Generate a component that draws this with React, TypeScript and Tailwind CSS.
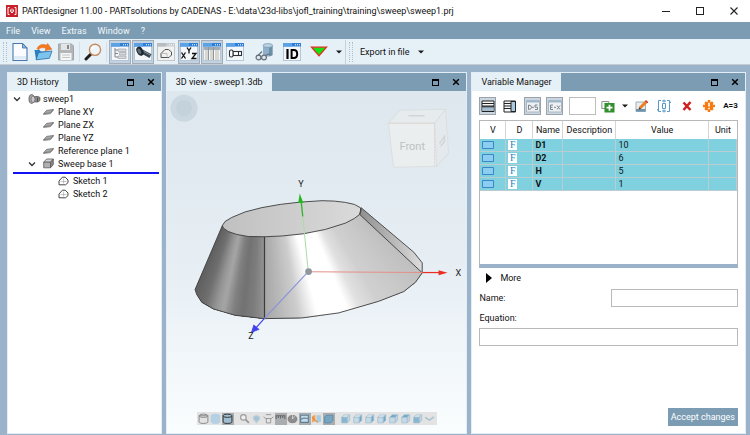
import React from 'react';
import type { ReactNode } from 'react';

/* ---------- shared icons ---------- */

function Caret() {
  return (
    <svg viewBox="0 0 6 4" className="h-1 w-1.5" aria-hidden="true">
      <path d="M0 .5h6L3 3.5z" fill="#1a1a1a" />
    </svg>
  );
}

function Chevron() {
  return (
    <svg viewBox="0 0 8 8" className="size-2" fill="none" stroke="#333" strokeWidth="1.3" aria-hidden="true">
      <path d="M1 2.5 4 5.5 7 2.5" />
    </svg>
  );
}

function WindowIcon({ children, dim }: { children?: ReactNode; dim?: boolean }) {
  return (
    <svg viewBox="0 0 18 18" className="size-[18px]" aria-hidden="true">
      <rect x=".5" y=".5" width="17" height="17" fill={dim ? '#f1f1f0' : '#f4f7fa'} stroke={dim ? '#c3c6c9' : '#b4c6d8'} />
      <rect x="0" y="0" width="18" height="3.5" fill={dim ? '#c9cccf' : '#2f7fd6'} />
      <rect x="0" y="0" width="9" height="3.5" fill={dim ? '#b9bcc0' : '#5aa2e6'} />
      <path d="M12 1.8h1M14 1.8h1M16 1.8h1" stroke="#fff" strokeWidth="1" />
      {children}
    </svg>
  );
}

function PartIcon() {
  return (
    <svg viewBox="0 0 13 10" className="h-2.5 w-[13px]" aria-hidden="true">
      <path d="M5 2.5h5l2 1v3l-2 1.5H5z" fill="#8b8b8b" stroke="#555" strokeWidth=".7" />
      <ellipse cx="3.6" cy="5" rx="2.6" ry="4.4" fill="#a9a9a9" stroke="#555" strokeWidth=".8" />
      <ellipse cx="5" cy="5.2" rx="2" ry="3.2" fill="#c9c9c9" stroke="#666" strokeWidth=".7" />
      <path d="M9.5 3.5v4" stroke="#444" strokeWidth=".8" />
    </svg>
  );
}

function PlaneIcon() {
  return (
    <svg viewBox="0 0 11 8" className="h-2 w-[11px]" aria-hidden="true">
      <path d="M.6 5.8 3.6 2.4l6.8-.9-3 3.4z" fill="#a6a6a6" stroke="#6b6b6b" strokeWidth=".8" />
      <path d="M.6 5.8v.7l6.8-.8 3-3.4v-.8" fill="none" stroke="#6b6b6b" strokeWidth=".7" />
    </svg>
  );
}

function SweepIcon() {
  return (
    <svg viewBox="0 0 11 11" className="size-[11px]" aria-hidden="true">
      <path d="M.7 4.2 3.6 1h6.7l-2.8 3.2z" fill="#d4d4d4" stroke="#5c5c5c" strokeWidth=".8" />
      <path d="M.7 4.2h6.8v5.6H.7z" fill="#b0b0b0" stroke="#5c5c5c" strokeWidth=".8" />
      <path d="m7.5 4.2 2.8-3.2v5.6L7.5 9.8z" fill="#878787" stroke="#5c5c5c" strokeWidth=".8" />
    </svg>
  );
}

function SketchIcon() {
  return (
    <svg viewBox="0 0 11 10" className="h-2.5 w-[11px]" fill="none" stroke="#333" strokeWidth=".9" aria-hidden="true">
      <path d="M1 8.8V5L4.4 1.2h2.8L10 4v2.6L7.6 8.8z" fill="#fff" />
      <path d="M5.6 2.5v5M2.6 5.6h6" stroke="#aaa" strokeWidth=".7" />
    </svg>
  );
}

/* ---------- main toolbar ---------- */

type Tool = { label: string; icon: ReactNode; active?: boolean };

const fileTools: Tool[] = [
  {
    label: 'New',
    icon: (
      <svg viewBox="0 0 16 20" className="h-5 w-4">
        <path d="M1 1.5h9.5L15 6v12.500H1z" fill="#fafcff" stroke="#4a78ac" strokeWidth="1.1" />
        <path d="M10.500 1.500V6H15z" fill="#8fb6dd" stroke="#4a78ac" strokeWidth=".9" />
        <path d="M2 14h12v3.500H2z" fill="#dfebf7" />
      </svg>
    ),
  },
  {
    label: 'Open',
    icon: (
      <svg viewBox="0 0 20 18" className="h-[18px] w-5">
        <path d="M1.500 7h5l1.500 1.500h8V15l-13 1.500z" fill="#2b7fc0" />
        <path d="M3 16.800 5.500 9.500 19 8l-2.600 7.300z" fill="#7cc3ee" stroke="#2470ac" strokeWidth=".8" />
        <path d="M4 5.500C6 1.500 10 .5 13.500 2.300L14.600 .6 18.800 6.300 12 7.600l1-2C10.500 4 7 4.300 5.500 7z" fill="#f47a20" stroke="#dd5c0c" strokeWidth=".5" />
      </svg>
    ),
  },
  {
    label: 'Save',
    icon: (
      <svg viewBox="0 0 16 18" className="h-[18px] w-4">
        <path d="M.5 1h13L15.500 3v14H.5z" fill="#b3b6b9" stroke="#a3a6a9" />
        <path d="M3 1h9v6H3z" fill="#e2e4e6" />
        <path d="M9 2h2v4H9z" fill="#85888c" />
        <path d="M2.500 10h11v7h-11z" fill="#f5f6f7" />
        <path d="M4 12h8M4 14.500h8" stroke="#c2c5c8" />
      </svg>
    ),
  },
];

const searchTool: Tool = {
  label: 'Search',
  icon: (
    <svg viewBox="0 0 18 18" className="size-[18px]">
      <path d="M7.500 10.500 2 16" stroke="#1d1d1d" strokeWidth="3" strokeLinecap="round" />
      <circle cx="11" cy="6.800" r="5.600" fill="#eef5fb" stroke="#c98a5a" strokeWidth="1.400" />
      <path d="M8 6.500a3.200 3.200 0 0 1 3-3" fill="none" stroke="#fff" strokeWidth="1.500" />
    </svg>
  ),
};

const windowTools: Tool[] = [
  {
    label: 'History window',
    active: true,
    icon: (
      <WindowIcon>
        <path d="M4 5v9M4 7h3M4 10.500h3M4 14h3" stroke="#7f8488" fill="none" />
        <path d="M7 6h8v2.500H7zM8.500 9.500H15V12H8.500zM7 13h8v2.500H7z" fill="#d5d8da" stroke="#9a9fa3" strokeWidth=".6" />
      </WindowIcon>
    ),
  },
  {
    label: '3D window',
    active: true,
    icon: (
      <WindowIcon>
        <path d="m8 8.500 8.500 4.700" stroke="#39454f" strokeWidth="4.200" />
        <path d="m8.500 7.700 8 4.400" stroke="#8897a4" strokeWidth="1" />
        <ellipse cx="6" cy="8.200" rx="3.200" ry="4.800" transform="rotate(-28 6 8.200)" fill="#1f272e" />
        <ellipse cx="5.300" cy="8.200" rx="1.600" ry="2.900" transform="rotate(-28 5.300 8.200)" fill="#5e6c78" />
      </WindowIcon>
    ),
  },
  {
    label: 'Sketch window',
    icon: (
      <WindowIcon dim>
        <path d="M4 14.500V10.500L8 6.500h3.500L14.500 9v3L12 14.500z" fill="none" stroke="#4f5254" />
        <path d="M4 10.500h6v4" fill="none" stroke="#aeb1b3" strokeWidth=".8" />
      </WindowIcon>
    ),
  },
  {
    label: 'Coordinate window',
    active: true,
    icon: (
      <WindowIcon>
        <g fill="none" stroke="#111" strokeWidth="1.300">
          <path d="m1.500 9.500 4 6M5.500 9.500l-4 6" />
          <path d="m7 4.500 2 3 2-3M9 7.500v3" />
          <path d="M12 10.500h4l-4 5h4.500" />
        </g>
      </WindowIcon>
    ),
  },
  {
    label: 'Table window',
    active: true,
    icon: (
      <WindowIcon>
        <path d="M1 4h16v3H1z" fill="#a3adb6" />
        <path d="M2 7h3v10H2zM7 7h3v10H7zM12 7h4v10h-4z" fill="#d9d5cf" />
        <path d="M5.500 4v13M10.500 4v13" stroke="#8f979e" />
      </WindowIcon>
    ),
  },
  {
    label: 'Part window',
    icon: (
      <WindowIcon>
        <g fill="#fff" stroke="#2d3338" strokeWidth="1.100">
          <rect x="7" y="8.500" width="8.500" height="4" />
          <rect x="3.500" y="7" width="3.500" height="7" rx="1.500" />
          <path d="M12.500 8.500v4" />
        </g>
      </WindowIcon>
    ),
  },
];

const linkTool: Tool = {
  label: 'Link geometry',
  icon: (
    <svg viewBox="0 0 20 18" className="h-[18px] w-5">
      <path d="M8 2.500v9.500c2 2 7.500 2 9.500 0V2.500z" fill="#8fb0c8" />
      <path d="M14 3v10c1.500 0 2.800-.4 3.500-1V2.500z" fill="#6d90a9" />
      <ellipse cx="12.800" cy="2.500" rx="4.800" ry="2" fill="#b9d0e0" stroke="#6a8ca4" strokeWidth=".6" />
      <g fill="none" stroke="#66717a" strokeWidth="1.200">
        <circle cx="3.500" cy="14.500" r="2.400" fill="#dfe8ee" />
        <circle cx="9" cy="14.500" r="2.400" fill="#dfe8ee" />
        <path d="M3 12.500 7 8.500M10.500 12.500l3-1.500h2" />
      </g>
    </svg>
  ),
};

const idTool: Tool = {
  label: 'ID',
  icon: (
    <WindowIcon>
      <path d="M4.500 6v10" stroke="#000" strokeWidth="2.200" />
      <path d="M8.600 7v8h2.200q3.400 0 3.400-4t-3.400-4z" fill="none" stroke="#000" strokeWidth="2" />
    </WindowIcon>
  ),
};

function ToolButton({ tool }: { tool: Tool }) {
  return (
    <button
      type="button"
      aria-label={tool.label}
      className={
        tool.active
          ? 'flex h-6 w-[22px] items-center justify-center border border-[#a3adb8] bg-[#c3d2e0]'
          : 'flex h-6 w-[22px] items-center justify-center'
      }
    >
      {tool.icon}
    </button>
  );
}

function Grip() {
  return <span className="h-5 w-1 border-x border-dotted border-[#aebfcd]" />;
}

function MainToolbar() {
  return (
    <div className="flex h-[26px] shrink-0 items-center border-b border-[#c3ccd3] bg-[#e6f0f7] pl-[3px]">
      <Grip />
      <div className="ml-[2px] flex gap-px">
        {fileTools.map((t) => (
          <ToolButton key={t.label} tool={t} />
        ))}
      </div>
      <span className="ml-[2px] h-5 w-px bg-[#d3dee6]" />
      <div className="ml-[2px]">
        <ToolButton tool={searchTool} />
      </div>
      <span className="mx-[2px] h-5 w-px bg-[#d3dee6]" />
      <div className="flex gap-px">
        {windowTools.map((t) => (
          <ToolButton key={t.label} tool={t} />
        ))}
      </div>
      <div className="ml-2 flex gap-[5px]">
        <ToolButton tool={linkTool} />
        <ToolButton tool={idTool} />
        <button type="button" aria-label="Generate" className="flex h-6 items-center gap-2 pl-[2px]">
          <svg viewBox="0 0 18 12" className="h-3 w-[18px]" aria-hidden="true">
            <path d="M1.500 1.200h15L9 9.800z" fill="#12e312" stroke="#e0301e" strokeWidth="1.300" />
          </svg>
          <Caret />
        </button>
      </div>
      <span className="mx-[3px] h-6 w-px bg-[#c6d2db]" />
      <Grip />
      <button type="button" className="ml-[7px] flex items-center gap-2 whitespace-nowrap">
        Export in file
        <Caret />
      </button>
    </div>
  );
}

/* ---------- panels ---------- */

function Panel({ title, children }: { title: string; children: ReactNode }) {
  return (
    <section className="flex min-h-0 min-w-0 flex-col border border-[#e3edf5] bg-white">
      <header className="flex h-[18px] shrink-0 items-stretch justify-between bg-[#7b9cb3]">
        <h2 className="flex items-center bg-[#e6f0f7] px-[9px] whitespace-nowrap">{title}</h2>
        <div className="flex items-center gap-[13px] pr-[6px]">
          <button type="button" aria-label={`Maximize ${title}`} className="h-[7px] w-[7px] border border-t-2 border-black" />
          <button type="button" aria-label={`Close ${title}`}>
            <svg viewBox="0 0 8 8" className="size-2" stroke="#000" strokeWidth="1.500" aria-hidden="true">
              <path d="m1.200 1.200 5.600 5.600M6.800 1.200 1.200 6.800" />
            </svg>
          </button>
        </div>
      </header>
      {children}
    </section>
  );
}

function TreeRow({ icon, label, open, level }: { icon: ReactNode; label: string; open?: boolean; level: 0 | 1 | 2 }) {
  const indent = level === 0 ? 'pl-[5px]' : level === 1 ? 'pl-5' : 'pl-[35px]';
  return (
    <li className={`flex h-[13px] items-center whitespace-nowrap ${indent}`}>
      <span className="flex w-[15px] items-center">{open && <Chevron />}</span>
      <span className="flex w-[15px] items-center">{icon}</span>
      {label}
    </li>
  );
}

function HistoryPanel() {
  return (
    <Panel title="3D History">
      <ul className="pt-px">
        <TreeRow level={0} open icon={<PartIcon />} label="sweep1" />
        <TreeRow level={1} icon={<PlaneIcon />} label="Plane XY" />
        <TreeRow level={1} icon={<PlaneIcon />} label="Plane ZX" />
        <TreeRow level={1} icon={<PlaneIcon />} label="Plane YZ" />
        <TreeRow level={1} icon={<PlaneIcon />} label="Reference plane 1" />
        <TreeRow level={1} open icon={<SweepIcon />} label="Sweep base 1" />
        <li aria-hidden="true" className="mt-[2px] mr-[2px] ml-[5px] h-[2px] bg-[#1212f5]" />
        <TreeRow level={2} icon={<SketchIcon />} label="Sketch 1" />
        <TreeRow level={2} icon={<SketchIcon />} label="Sketch 2" />
      </ul>
    </Panel>
  );
}

/* ---------- 3D model ---------- */

type Pt = [number, number];

const topRim: Pt[] = [[222.3, 225], [223.3, 227.7], [228, 231], [236.7, 234], [248, 236], [264, 236.3], [282, 235.500], [303.3, 233.3], [325, 229], [345, 222.7], [354, 218], [359.3, 214]];
const topBack: Pt[] = [[359.3, 214], [360.7, 210], [360, 207.3], [354, 204], [345, 202], [334, 200.700], [321.7, 200.3], [300, 201.7], [280, 204], [261.7, 207.2], [245, 211.500], [231.7, 217], [225, 221], [222.3, 225]];
const baseRim: Pt[] = [[195, 289], [196.7, 294], [201.7, 301.7], [213.3, 308.3], [235, 314.7], [264, 318], [301.7, 317.3], [338.3, 312.3], [378.3, 300.7], [403.3, 291], [415, 281.7], [421.7, 272.3]];
const rightRib: Pt[] = [[359.3, 214], [360.7, 207.3], [413.3, 251.7], [421.7, 262.3], [421.7, 272.3]];

const yAt = (rim: Pt[], x: number) => {
  for (let i = 1; i < rim.length; i++) {
    const [x0, y0] = rim[i - 1];
    const [x1, y1] = rim[i];
    if (x <= x1) return y0 + ((y1 - y0) * (x - x0)) / (x1 - x0);
  }
  return rim[rim.length - 1][1];
};

const shadeAt = (stops: Pt[], t: number) => {
  const v = Math.round(yAt(stops, t));
  return `rgb(${v},${v},${v})`;
};

const between = (rim: Pt[], from: number, to: number): Pt[] => [
  [from, yAt(rim, from)],
  ...rim.filter(([x]) => x > from && x < to),
  [to, yAt(rim, to)],
];

const leftStops: Pt[] = [[0, 96], [0.15, 112], [0.3, 150], [0.4, 166], [0.55, 128], [0.68, 114], [0.85, 126], [1, 148]];
const frontStops: Pt[] = [[0, 166], [0.1, 184], [0.22, 206], [0.29, 236], [0.34, 255], [0.53, 255], [0.6, 226], [0.72, 208], [0.88, 200], [1, 192]];

/* Each band runs to the far edge of its face and is covered in part by the next, so no seam shows. */
function bands(topX: Pt, baseX: Pt, stops: Pt[], count: number) {
  return Array.from({ length: count }, (_, i) => {
    const a = i / count;
    const ta = topX[0] + (topX[1] - topX[0]) * a;
    const ba = baseX[0] + (baseX[1] - baseX[0]) * a;
    const points = [...between(topRim, ta, topX[1]), ...between(baseRim, ba, baseX[1]).reverse()].join(' ');
    return <polygon key={i} points={points} fill={shadeAt(stops, a + 0.5 / count)} />;
  });
}

function Model() {
  return (
    <svg viewBox="167 91 299 320" className="min-h-0 w-full flex-1 font-[Roboto,sans-serif]" role="img" aria-label="Sweep model">
      <defs>
        <linearGradient id="cap" x1="0" x2="1">
          <stop offset="0" stopColor="#c0c0c0" />
          <stop offset="1" stopColor="#dadada" />
        </linearGradient>
        <linearGradient id="rib" x1="0" x2="1">
          <stop offset="0" stopColor="#8f8f8f" />
          <stop offset="1" stopColor="#dcdcdc" />
        </linearGradient>
      </defs>

      <circle cx="184" cy="108" r="13.500" fill="#cbd8e1" />
      <circle cx="184" cy="108" r="8" fill="#c4d2dc" />

      <g fill="#e6ebee" stroke="#dcdfe1" strokeWidth="1">
        <path d="m388 123 11-13 46-1-11 14z" />
        <path d="m434 123 11-14 3 44-12 13z" fill="#e3e9ed" />
        <path d="M388 123h46l2 43-43 1z" fill="#ebeeee" />
        <path d="M388 123h46v43" fill="none" stroke="#e3d3d0" strokeDasharray="2 1" />
      </g>
      <text x="399" y="150" fontSize="11" fill="#bdc1c4">Front</text>
      <path d="m439 143 5-7v5l-4 5M408 115.500h16" fill="none" stroke="#d3d3d5" strokeWidth="1.300" />

      {bands([222.3, 264], [195, 264], leftStops, 40)}
      {bands([264, 359.3], [264, 421.7], frontStops, 80)}
      <polygon points={rightRib.join(' ')} fill="url(#rib)" />
      <polygon points={[...topRim, ...topBack].join(' ')} fill="url(#cap)" />
      <g fill="none" stroke="#3c3c3c" strokeWidth=".9" strokeLinejoin="round">
        <polygon points={[...topRim, ...topBack].join(' ')} />
        <polyline points={[[222.3, 225], ...baseRim].join(' ')} />
        <polygon points={rightRib.join(' ')} />
        <path d="M264.300 236.300V318" strokeWidth="1.200" />
      </g>

      <path d="m308 271-5.500-55" stroke="#a9dba6" />
      <path d="m302.500 216-1.500-14" stroke="#2fb52a" strokeWidth="1.300" />
      <path d="m299.500 193 3.600 9.500h-5.200z" fill="#22b81e" />
      <path d="M308 271.300 422 272" stroke="#e58f88" />
      <path d="M422 272h17" stroke="#ea2f22" strokeWidth="1.200" />
      <path d="m447 272.300-9 2.500v-5z" fill="#ea2f22" />
      <path d="m308 271-44 47" stroke="#8490dc" />
      <path d="m264 318-8 9" stroke="#4343ee" strokeWidth="1.200" />
      <path d="m251.500 331.500 2.200-6.800 4.800 4z" fill="#4343ee" stroke="#4343ee" />
      <circle cx="308.300" cy="271" r="3.400" fill="#8f999c" />
      <g fontSize="9" fill="#222">
        <text x="455" y="275">X</text>
        <text x="298" y="187">Y</text>
        <text x="248" y="338">Z</text>
      </g>
    </svg>
  );
}

/* ---------- view bar ---------- */

function CylinderGlyph({ fill, stroke }: { fill: string; stroke: string }) {
  return (
    <g fill={fill} stroke={stroke} strokeWidth=".9">
      <path d="M1 2.500v5.500c0 2 8 2 8 0V2.500z" />
      <ellipse cx="5" cy="2.500" rx="4" ry="1.500" />
    </g>
  );
}

function CubeGlyph({ face }: { face: 'front' | 'side' | 'top' }) {
  return (
    <g stroke="#9fbccd" strokeWidth=".6">
      <path d="m1.500 4 2.300-2.300h5L6.500 4z" fill={face === 'top' ? '#6fa8c8' : '#d8e6ee'} />
      <path d="m6.500 4 2.300-2.300v5L6.500 9z" fill={face === 'side' ? '#6fa8c8' : '#c0d5e1'} />
      <path d="M1.500 4h5v5h-5z" fill={face === 'front' ? '#86b6d0' : '#c4dae6'} />
    </g>
  );
}

const viewTools: { label: string; pressed?: boolean; gap?: boolean; glyph: ReactNode }[] = [
  { label: 'Wireframe', glyph: <CylinderGlyph fill="none" stroke="#888" /> },
  { label: 'Shaded', glyph: <CylinderGlyph fill="#b5d0e3" stroke="#b5d0e3" /> },
  { label: 'Shaded with edges', pressed: true, glyph: <CylinderGlyph fill="#9dbdd2" stroke="#333" /> },
  { label: 'Zoom', gap: true, glyph: <g stroke="#999" fill="#eee"><circle cx="4" cy="4" r="2.500" /><path d="m6 6 3 3" strokeWidth="1.600" /></g> },
  { label: 'Move', glyph: <path d="M2 3.500 5 2l3 1.500v2L5 9 2 5.500z" fill="#a9c3d6" stroke="#c5d3dd" /> },
  { label: 'Fit view', glyph: <g fill="none" stroke="#999" strokeWidth=".9"><path d="m.5 3.500 2 1.500h5l2-1.500M3 5v4h4V5M2.500 1.500h5" /></g> },
  { label: 'Measure', pressed: true, glyph: <path d="M1 5.500v-3h8v3M3 2.500v2M5 2.500V5M7 2.500v2" fill="none" stroke="#666" /> },
  { label: 'Rotate', glyph: <g fill="#8d8d8d" stroke="#777" strokeWidth=".7"><ellipse cx="5" cy="5.500" rx="4" ry="3.300" /><path d="M5 2v3.500L7 3" stroke="#ddd" /></g> },
  { label: 'Section', pressed: true, glyph: <path d="M1.500 2h7v6.500h-7zM1.500 6l3-1.500 4 .5" fill="#c5dbe9" stroke="#5d7f95" /> },
  { label: 'Explode', glyph: <g><path d="m1 3 3-1.500v6L1 8.500z" fill="#f0a050" /><path d="M5 2h4v6L5 9z" fill="#a9cbe0" /><path d="m1 4 5 4.500" stroke="#e58a3a" /></g> },
  { label: 'Perspective', pressed: true, glyph: <path d="M1.500 3.500 3.500 2H9v5L7 9H1.500z" fill="#76a5c2" stroke="#5486a5" strokeWidth=".7" /> },
  { label: 'Front', gap: true, glyph: <CubeGlyph face="front" /> },
  { label: 'Back', glyph: <CubeGlyph face="side" /> },
  { label: 'Left', glyph: <CubeGlyph face="side" /> },
  { label: 'Right', glyph: <CubeGlyph face="side" /> },
  { label: 'Top', glyph: <CubeGlyph face="top" /> },
  { label: 'Bottom', glyph: <CubeGlyph face="top" /> },
  { label: 'Isometric', glyph: <CubeGlyph face="front" /> },
  { label: 'More views', glyph: <path d="m1 4 4 2.500L9 3.500" fill="none" stroke="#a9c0ce" strokeWidth="1.300" /> },
];

function ViewPanel() {
  return (
    <Panel title="3D view - sweep1.3db">
      <div className="flex min-h-0 flex-1 flex-col items-center bg-linear-to-b from-[#dde7ed] via-[#e6eef4] via-50% to-[#fafdfe] pb-2">
        <Model />
        <div className="flex h-[13px] items-center bg-[#e3e3e4] px-px">
          {viewTools.map((t) => (
            <button
              key={t.label}
              type="button"
              aria-label={t.label}
              className={`flex h-3 w-3 items-center justify-center ${t.pressed ? 'bg-[#a9adb0]' : ''} ${t.gap ? 'ml-[5px]' : ''}`}
            >
              <svg viewBox="0 0 10 10" className="size-[11px]" aria-hidden="true">
                {t.glyph}
              </svg>
            </button>
          ))}
        </div>
      </div>
    </Panel>
  );
}

/* ---------- variable manager ---------- */

const variables = [
  { name: 'D1', value: '10' },
  { name: 'D2', value: '6' },
  { name: 'H', value: '5' },
  { name: 'V', value: '1' },
];

function VmButton({ label, active, children }: { label: string; active?: boolean; children: ReactNode }) {
  return (
    <button
      type="button"
      aria-label={label}
      className={
        active
          ? 'flex h-[18px] w-[17px] items-center justify-center border border-[#9ba3aa] bg-[#cbd6e0]'
          : 'flex h-[18px] w-[17px] items-center justify-center'
      }
    >
      {children}
    </button>
  );
}

function VmToolbar() {
  return (
    <div className="flex h-[18px] items-center justify-between">
      <VmButton label="Rows layout" active>
        <svg viewBox="0 0 14 13" className="h-[13px] w-3.5">
          <path d="M1 1h12v10.500H1z" fill="#f8f8f8" stroke="#222" />
          <path d="M1 3.500h12M1 6h12" stroke="#222" />
          <path d="M1.500 7h11v4h-11z" fill="#a4bccd" />
          <path d="M1 6.800h12" stroke="#222" />
        </svg>
      </VmButton>
      <VmButton label="Columns layout">
        <svg viewBox="0 0 14 13" className="h-[13px] w-3.5">
          <path d="M1 1h11.500v11H1z" fill="#f8f8f8" stroke="#222" />
          <path d="M1 3.500h7M1 6h7M1 8.500h7" stroke="#222" />
          <path d="M8 1.500h4.500v10H8z" fill="#a8cbe2" stroke="#222" />
        </svg>
      </VmButton>
      <VmButton label="D to S" active>
        <svg viewBox="0 0 14 14" className="size-3.5">
          <path d="M.5 1.500h13v11.500H.5z" fill="#eef1f4" stroke="#aab8c4" />
          <path d="M.5 1.500h13v2H.5z" fill="#9fb7ca" />
          <path d="M2.500 6v4.500q3 0 3-2.200T2.500 6M6 8.300h2M11.500 6H9v2.200h2.500v2.300H9" fill="none" stroke="#7d848a" />
        </svg>
      </VmButton>
      <VmButton label="E to value" active>
        <svg viewBox="0 0 14 14" className="size-3.5">
          <path d="M.5 1.500h13v11.500H.5z" fill="#eef1f4" stroke="#aab8c4" />
          <path d="M.5 1.500h13v2H.5z" fill="#9fb7ca" />
          <path d="M5 6H2.500v4.500H5M2.500 8.300h2M6 8.300h2M9 6.500l3 4M12 6.500l-3 4" fill="none" stroke="#7d848a" />
        </svg>
      </VmButton>
      <input type="text" aria-label="Filter" className="h-[18px] w-[27px] border border-[#bdbdbd] bg-white outline-none" />
      <button type="button" aria-label="Add variable" className="flex items-center gap-[7px]">
        <svg viewBox="0 0 14 14" className="size-3.5" aria-hidden="true">
          <path d="M.8 2.500h7v7h-7z" fill="#f5f5f5" stroke="#8c948c" />
          <path d="M3.500 4h10v9.500h-10z" fill="#2f8f2b" />
          <path d="M8.500 5.700v6M5.500 8.700h6" stroke="#fff" strokeWidth="1.800" />
        </svg>
        <Caret />
      </button>
      <VmButton label="Edit variable">
        <svg viewBox="0 0 14 14" className="size-3.5">
          <path d="M1 3h9.500v9.500H1z" fill="#e7ecef" stroke="#9fb0bc" />
          <path d="M1 10h9.500v2.500H1z" fill="#6e93ad" />
          <path d="m5 9 6.500-6.500" stroke="#ef7d22" strokeWidth="3" />
          <path d="m10.500 1.500 2.300 2.300" stroke="#c93b2b" strokeWidth="1.500" />
          <path d="m3.500 10.500.7-2.600 2 2z" fill="#5b3a20" />
        </svg>
      </VmButton>
      <VmButton label="Rename variable">
        <svg viewBox="0 0 14 14" className="size-3.5" fill="none" stroke="#5a9ac6" strokeWidth="1">
          <path d="M4 1.500H1.500v11H4M10 1.500h2.500v11H10" />
          <path d="M5 2h4M5 12h4M5.500 4.500h3v5h-3zM7 .500v3M7 10.500v3" />
          <path d="m0 10 1.500 2M14 4l-1.500-2" />
        </svg>
      </VmButton>
      <VmButton label="Delete variable">
        <svg viewBox="0 0 12 12" className="size-3" stroke="#d01f1f" strokeWidth="2.500">
          <path d="m2.500 2.500 7 7.500M9.500 2 2.500 10" />
        </svg>
      </VmButton>
      <VmButton label="Check variables">
        <svg viewBox="0 0 14 14" className="size-3">
          <g fill="#f57a12">
            <circle cx="7" cy="7" r="5" />
            <path d="M5.500 0h3v14h-3zM0 5.500h14v3H0z" />
            <path d="m1.500 3.500 2-2 9 9-2 2zM10.500 1.500l2 2-9 9-2-2z" />
          </g>
          <path d="M7 3.300v4.400M7 9v1.800" stroke="#fff" strokeWidth="1.800" />
        </svg>
      </VmButton>
      <button type="button" className="w-[15px] text-center text-[8px] font-bold whitespace-nowrap">
        A=3
      </button>
    </div>
  );
}

const headCell = 'border-r border-[#d5d5d5] p-0 text-center font-normal last:border-r-0';
const bodyCell = 'border-r border-b border-[#b9cdd2] p-0 pl-[2px]';

function VariableTable() {
  return (
    <div className="mt-[5px] h-[148px] border border-b-4 border-[#b8b8b8] border-b-[#9ab3cb]">
      <table className="w-full table-fixed border-separate border-spacing-0 leading-3">
        <colgroup>
          <col className="w-[26px]" />
          <col className="w-[27px]" />
          <col className="w-[30px]" />
          <col className="w-[53px]" />
          <col />
          <col className="w-7" />
        </colgroup>
        <thead>
          <tr className="h-[18px] shadow-[0_1px_0_#b8b8b8]">
            {['V', 'D', 'Name', 'Description', 'Value', 'Unit'].map((h) => (
              <th key={h} scope="col" className={headCell}>
                {h}
              </th>
            ))}
          </tr>
        </thead>
        <tbody className="bg-[#80d1e0]">
          {variables.map((v) => (
            <tr key={v.name} className="h-[13px]">
              <td className={bodyCell}>
                <svg viewBox="0 0 12 8" className="h-2 w-3" aria-hidden="true">
                  <path d="M.5.500h11v7H.5z" fill="#8ccdf2" stroke="#3d86c6" />
                </svg>
              </td>
              <td className={bodyCell}>
                <span className="flex h-[10px] w-[9px] items-center justify-center bg-white font-['Liberation_Serif',serif] text-[10px] leading-[10px] text-[#2a7fc0]">
                  F
                </span>
              </td>
              <td className={bodyCell + ' font-bold'}>{v.name}</td>
              <td className={bodyCell} />
              <td className={bodyCell}>{v.value}</td>
              <td className={bodyCell} />
            </tr>
          ))}
        </tbody>
      </table>
    </div>
  );
}

function VariablePanel() {
  return (
    <Panel title="Variable Manager">
      <div className="flex min-h-0 flex-1 flex-col px-[7px] pt-[6px] pb-[7px]">
        <VmToolbar />
        <VariableTable />
        <button type="button" className="mt-1 flex h-3 items-center gap-2 self-start pl-[7px]">
          <svg viewBox="0 0 6 10" className="h-2.5 w-1.5" aria-hidden="true">
            <path d="M0 0v10l6-5z" fill="#000" />
          </svg>
          More
        </button>
        <div className="mt-[5px] flex items-center justify-between">
          <label htmlFor="variable-name">Name:</label>
          <input id="variable-name" type="text" className="h-[18px] w-[127px] border border-[#b9b9b9] px-1 outline-none" />
        </div>
        <label htmlFor="variable-equation" className="mt-[5px] leading-3">
          Equation:
        </label>
        <input id="variable-equation" type="text" className="mt-1 h-[18px] w-full shrink-0 border border-[#b9b9b9] px-1 outline-none" />
        <button type="button" className="mt-auto h-[18px] self-end bg-[#7b9cb3] px-[3px] text-white">
          Accept changes
        </button>
      </div>
    </Panel>
  );
}

/* ---------- application window ---------- */

export default function App() {
  return (
    <div className="flex h-screen flex-col overflow-hidden bg-[#9ab3cb] font-[Roboto,sans-serif] text-[9px] leading-3 text-[#111]">
      <div className="flex h-[22px] shrink-0 items-center justify-between bg-white pl-[6px]">
        <div className="flex items-center gap-1">
          <svg viewBox="0 0 12 12" className="size-3" aria-hidden="true">
            <rect width="12" height="12" fill="#c8202a" />
            <path d="M3.500 2.500h-1.500v7h1.500M8.500 2.500H10v7H8.500" fill="none" stroke="#fff" />
            <path d="M4.500 4.500v2L6 8l1.500-1.500v-2M6 3.500V8" fill="none" stroke="#fff" strokeWidth=".9" />
          </svg>
          <h1 className="whitespace-nowrap">
            {'PARTdesigner 11.00 - PARTsolutions by CADENAS - E:\\data\\23d-libs\\jofl_training\\training\\sweep\\sweep1.prj'}
          </h1>
        </div>
        <div className="flex items-center gap-[26px] pr-3">
          <button type="button" aria-label="Minimize">
            <svg viewBox="0 0 8 8" className="size-2" stroke="#222" aria-hidden="true">
              <path d="M0 4.500h8" />
            </svg>
          </button>
          <button type="button" aria-label="Maximize" className="size-2 border border-[#222]" />
          <button type="button" aria-label="Close">
            <svg viewBox="0 0 8 8" className="size-2" stroke="#222" strokeWidth="1.100" aria-hidden="true">
              <path d="m.5.5 7 7M7.500.500l-7 7" />
            </svg>
          </button>
        </div>
      </div>
      <nav className="flex h-[17px] shrink-0 items-center gap-[11px] bg-[#7b9cb3] pl-[6px] text-[#f2f7fa]">
        {['File', 'View', 'Extras', 'Window', '?'].map((m) => (
          <button key={m} type="button">
            {m}
          </button>
        ))}
      </nav>
      <MainToolbar />
      <main className="grid min-h-0 flex-1 grid-cols-[155fr_302fr_275fr] grid-rows-[minmax(0,1fr)] gap-1 pt-[7px] pr-[4px] pb-px pl-[7px]">
        <HistoryPanel />
        <ViewPanel />
        <VariablePanel />
      </main>
    </div>
  );
}
